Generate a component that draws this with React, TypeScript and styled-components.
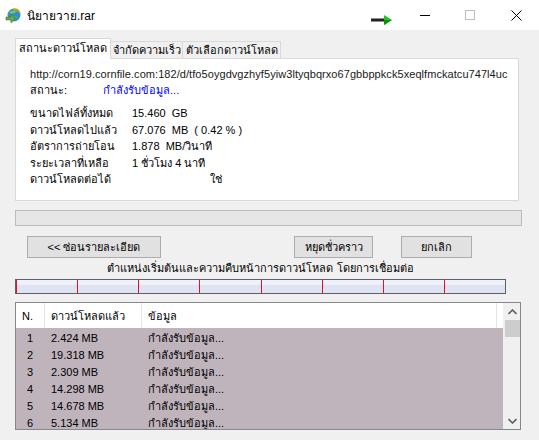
import React from "react";
import styled, { createGlobalStyle } from "styled-components";

const Global = createGlobalStyle`
  html, body { margin: 0; padding: 0; background: #f0f0f0; }
  * { box-sizing: border-box; }
`;

const FONT = `Tahoma, "Liberation Sans", "Noto Sans", "DejaVu Sans", sans-serif`;

const Window = styled.div`
  width: 539px;
  height: 440px;
  background: #f0f0f0;
  font-family: ${FONT};
  font-size: 11px;
  color: #000;
  display: flex;
  flex-direction: column;
  overflow: hidden;
`;

const TitleBar = styled.div`
  height: 30px;
  background: #fff;
  display: flex;
  align-items: center;
  padding-left: 5px;
  flex-shrink: 0;
`;

const TitleText = styled.div`
  font-size: 12px;
  margin-left: 5px;
  flex: 1;
`;

const Controls = styled.div`
  display: flex;
  align-items: center;
  height: 30px;
`;

const CtrlBtn = styled.div<{ $w: number }>`
  width: ${(p) => p.$w}px;
  height: 30px;
  display: flex;
  align-items: center;
  justify-content: center;
`;

const Body = styled.div`
  padding: 8px 0 0 15px;
  display: flex;
  flex-direction: column;
`;

const TabStrip = styled.div`
  display: flex;
  align-items: flex-end;
  height: 21px;
  position: relative;
  z-index: 1;
  margin-bottom: -1px;
`;

const Tab = styled.div<{ $active?: boolean; $w: number }>`
  width: ${(p) => p.$w}px;
  height: ${(p) => (p.$active ? 21 : 18)}px;
  background: ${(p) => (p.$active ? "#fff" : "#f0f0f0")};
  border: 1px solid #d9d9d9;
  border-bottom: ${(p) => (p.$active ? "1px solid #fff" : "1px solid #d9d9d9")};
  ${(p) => (p.$active ? "" : "border-left: none;")}
  display: flex;
  align-items: center;
  justify-content: center;
  padding-bottom: ${(p) => (p.$active ? 2 : 0)}px;
  white-space: nowrap;
`;

const Panel = styled.div`
  width: 504px;
  height: 143px;
  background: #fff;
  border: 1px solid #d9d9d9;
  padding: 7px 0 0 14px;
  display: flex;
  flex-direction: column;
`;

const Url = styled.div`
  color: #1a1a1a;
  height: 16px;
  line-height: 16px;
  white-space: nowrap;
  overflow: hidden;
  letter-spacing: 0.06px;
`;

const StatusRow = styled.div`
  display: flex;
  height: 16px;
  line-height: 16px;
  margin-bottom: 7px;
`;

const StatusValue = styled.span`
  color: #0000ff;
  margin-left: 36px;
`;

const InfoRow = styled.div`
  display: grid;
  grid-template-columns: 102px 1fr;
  height: 16.5px;
  line-height: 16.5px;
  white-space: nowrap;
`;

const Value = styled.span<{ $indent?: number }>`
  padding-left: ${(p) => p.$indent ?? 0}px;
`;

const ProgressBar = styled.div`
  width: 507px;
  height: 16px;
  margin-top: 9px;
  background: #e6e6e6;
  border: 1px solid #bcbcbc;
`;

const ButtonRow = styled.div`
  display: flex;
  margin-top: 10px;
  padding-left: 12px;
  height: 22px;
`;

const Button = styled.div<{ $w: number; $ml?: number }>`
  width: ${(p) => p.$w}px;
  height: 22px;
  margin-left: ${(p) => p.$ml ?? 0}px;
  background: #e1e1e1;
  border: 1px solid #adadad;
  display: flex;
  align-items: center;
  justify-content: center;
  white-space: nowrap;
`;

const SegLabel = styled.div`
  width: 491px;
  text-align: center;
  height: 21px;
  line-height: 20px;
  white-space: nowrap;
`;

const SegBar = styled.div`
  width: 491px;
  height: 15px;
  border: 1px solid #5e5e6c;
  background: linear-gradient(#eef1f8 0%, #eef1f8 35%, #dde3f0 36%, #dde3f0 100%);
  display: grid;
  grid-template-columns: repeat(8, 1fr);
`;

const Seg = styled.div`
  border-left: 1px solid #e81123;
`;

const List = styled.div`
  margin-top: 8px;
  width: 506px;
  height: 128px;
  border: 1px solid #828790;
  display: flex;
  background: #fff;
`;

const ListMain = styled.div`
  flex: 1;
  display: flex;
  flex-direction: column;
  overflow: hidden;
`;

const cols = "29px 97px 355px 6px";

const HeaderRow = styled.div`
  display: grid;
  grid-template-columns: ${cols};
  height: 25px;
  flex-shrink: 0;
  background: #fff;
`;

const HeadCell = styled.div<{ $last?: boolean }>`
  border-right: 1px solid #e5e5e5;
  padding-left: ${(p) => (p.$last ? 0 : 6)}px;
  display: flex;
  align-items: center;
  white-space: nowrap;
  ${(p) => (p.$last ? "border-right: none;" : "")}
`;

const Rows = styled.div`
  flex: 1;
  background: #bfb3bc;
  display: flex;
  flex-direction: column;
  padding-top: 1px;
`;

const Row = styled.div`
  display: grid;
  grid-template-columns: ${cols};
  height: 17px;
  flex-shrink: 0;
  align-items: center;
  white-space: nowrap;
`;

const NumCell = styled.div`
  padding-left: 11px;
`;

const Cell = styled.div`
  padding-left: 6px;
`;

const Scrollbar = styled.div`
  width: 17px;
  background: #f0f0f0;
  display: flex;
  flex-direction: column;
  align-items: center;
  border-left: 1px solid #f0f0f0;
`;

const Arrow = styled.div`
  height: 17px;
  width: 17px;
  display: flex;
  align-items: center;
  justify-content: center;
  flex-shrink: 0;
`;

const Thumb = styled.div`
  width: 15px;
  height: 17px;
  background: #cdcdcd;
`;

const Track = styled.div`
  flex: 1;
`;

const AppIcon = () => (
  <svg width="17" height="16" viewBox="0 0 17 16">
    <circle cx="9" cy="8" r="6.5" fill="#2d8fd5" />
    <path d="M4 5 Q8 2 13 4 Q10 6 6 7 Z" fill="#7cc243" />
    <path d="M5 11 Q9 13 14 10 Q11 9 7 9 Z" fill="#4caf3c" />
    <path d="M1 10 L6 10 L6 7 L10 11.5 L6 16 L6 13 L1 13 Z" fill="#6aa84f" stroke="#3e7d2c" strokeWidth="0.6" />
    <path d="M8 2 Q14 1 15 6" fill="none" stroke="#f4b400" strokeWidth="1.4" />
  </svg>
);

const rows = [
  ["1", "2.424 MB"],
  ["2", "19.318 MB"],
  ["3", "2.309 MB"],
  ["4", "14.298 MB"],
  ["5", "14.678 MB"],
  ["6", "5.134 MB"],
];

export default function App() {
  return (
    <>
      <Global />
      <Window>
        <TitleBar>
          <AppIcon />
          <TitleText>นิยายวาย.rar</TitleText>
          <Controls>
            <CtrlBtn $w={40}>
              <svg width="22" height="10" viewBox="0 0 22 10" style={{ marginTop: 10 }}>
                <rect x="0" y="3.5" width="13" height="3" fill="#222" />
                <path d="M13 0 L21 5 L13 10 Z" fill="#1ec71e" />
                <path d="M13 5 L21 5 L13 10 Z" fill="#138a13" />
              </svg>
            </CtrlBtn>
            <CtrlBtn $w={45}>
              <svg width="10" height="10" viewBox="0 0 10 10">
                <line x1="0" y1="5.5" x2="10" y2="5.5" stroke="#000" strokeWidth="1" />
              </svg>
            </CtrlBtn>
            <CtrlBtn $w={46}>
              <svg width="10" height="10" viewBox="0 0 10 10">
                <rect x="0.5" y="0.5" width="9" height="9" fill="none" stroke="#bdbdbd" strokeWidth="1" />
              </svg>
            </CtrlBtn>
            <CtrlBtn $w={46}>
              <svg width="11" height="11" viewBox="0 0 11 11">
                <path d="M0.5 0.5 L10.5 10.5 M10.5 0.5 L0.5 10.5" stroke="#000" strokeWidth="1" />
              </svg>
            </CtrlBtn>
          </Controls>
        </TitleBar>
        <Body>
          <TabStrip>
            <Tab $active $w={96}>สถานะดาวน์โหลด</Tab>
            <Tab $w={72}>จำกัดความเร็ว</Tab>
            <Tab $w={98}>ตัวเลือกดาวน์โหลด</Tab>
          </TabStrip>
          <Panel>
            <Url>http://corn19.cornfile.com:182/d/tfo5oygdvgzhyf5yiw3ltyqbqrxo67gbbppkck5xeqlfmckatcu747l4uc</Url>
            <StatusRow>
              <span>สถานะ:</span>
              <StatusValue>กำลังรับข้อมูล...</StatusValue>
            </StatusRow>
            <InfoRow>
              <span>ขนาดไฟล์ทั้งหมด</span>
              <Value>15.460&nbsp; GB</Value>
            </InfoRow>
            <InfoRow>
              <span>ดาวน์โหลดไปแล้ว</span>
              <Value>67.076&nbsp; MB&nbsp; ( 0.42 % )</Value>
            </InfoRow>
            <InfoRow>
              <span>อัตราการถ่ายโอน</span>
              <Value>1.878&nbsp; MB/วินาที</Value>
            </InfoRow>
            <InfoRow>
              <span>ระยะเวลาที่เหลือ</span>
              <Value>1 ชั่วโมง 4 นาที</Value>
            </InfoRow>
            <InfoRow>
              <span>ดาวน์โหลดต่อได้</span>
              <Value $indent={78}>ใช่</Value>
            </InfoRow>
          </Panel>
          <ProgressBar />
          <ButtonRow>
            <Button $w={134}>&lt;&lt; ซ่อนรายละเอียด</Button>
            <Button $w={79} $ml={133}>หยุดชั่วคราว</Button>
            <Button $w={71} $ml={28}>ยกเลิก</Button>
          </ButtonRow>
          <SegLabel>ตำแหน่งเริ่มต้นและความคืบหน้าการดาวน์โหลด โดยการเชื่อมต่อ</SegLabel>
          <SegBar>
            {Array.from({ length: 8 }).map((_, i) => (
              <Seg key={i} />
            ))}
          </SegBar>
          <List>
            <ListMain>
              <HeaderRow>
                <HeadCell>N.</HeadCell>
                <HeadCell>ดาวน์โหลดแล้ว</HeadCell>
                <HeadCell>ข้อมูล</HeadCell>
                <HeadCell $last />
              </HeaderRow>
              <Rows>
                {rows.map(([n, mb]) => (
                  <Row key={n}>
                    <NumCell>{n}</NumCell>
                    <Cell>{mb}</Cell>
                    <Cell>กำลังรับข้อมูล...</Cell>
                    <div />
                  </Row>
                ))}
              </Rows>
            </ListMain>
            <Scrollbar>
              <Arrow>
                <svg width="9" height="6" viewBox="0 0 9 6">
                  <path d="M0.5 5 L4.5 1 L8.5 5" fill="none" stroke="#606060" strokeWidth="1.6" />
                </svg>
              </Arrow>
              <Thumb />
              <Track />
              <Arrow>
                <svg width="9" height="6" viewBox="0 0 9 6">
                  <path d="M0.5 1 L4.5 5 L8.5 1" fill="none" stroke="#606060" strokeWidth="1.6" />
                </svg>
              </Arrow>
            </Scrollbar>
          </List>
        </Body>
      </Window>
    </>
  );
}
